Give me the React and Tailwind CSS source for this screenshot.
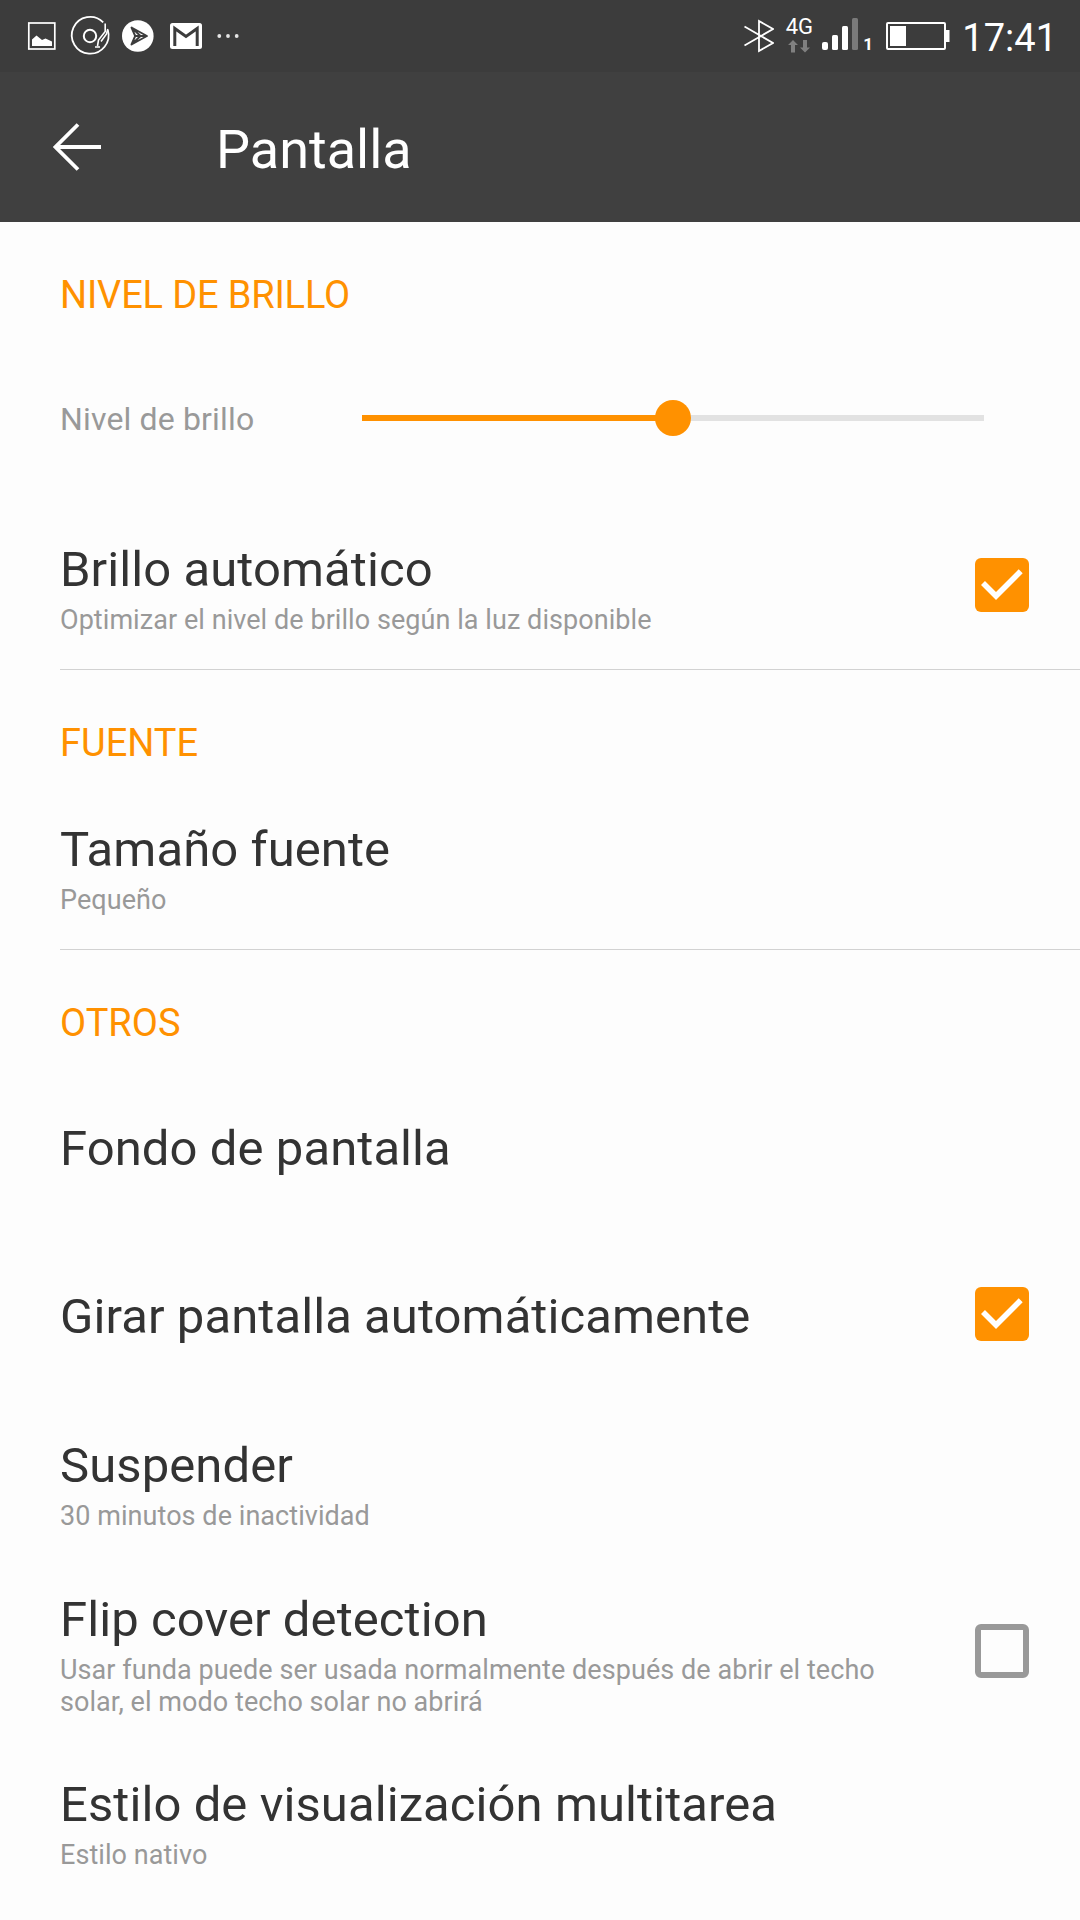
// Display settings screen — status bar, title bar and preference list
import clsx from 'clsx';

const SECTIONS = [
  {
    title: 'FUENTE',
    rows: [{ label: 'Tamaño fuente', summary: 'Pequeño', height: 'h-[168px]' }],
  },
  {
    title: 'OTROS',
    rows: [
      { label: 'Fondo de pantalla', height: 'h-[169px]' },
      { label: 'Girar pantalla automáticamente', checked: true, height: 'h-[168px]' },
      { label: 'Suspender', summary: '30 minutos de inactividad', height: 'h-[166px]' },
      {
        label: 'Flip cover detection',
        summary: 'Usar funda puede ser usada normalmente después de abrir el techo solar, el modo techo solar no abrirá',
        checked: false,
        height: 'h-[174px]',
      },
      { label: 'Estilo de visualización multitarea', summary: 'Estilo nativo', height: 'h-[164px]' },
    ],
  },
];

function NotificationIcons() {
  return (
    <svg width="250" height="72" viewBox="0 0 250 72" fill="none">
      {/* picture */}
      <rect x="28.8" y="23" width="26" height="26" stroke="#fff" strokeWidth="1.7" />
      <path d="M32 46V39.5L36.5 35.5L42 40L45.5 38.5L52 41.5V46Z" fill="#fff" />
      {/* turntable */}
      <path d="M103.2 22.3A18.4 18.4 0 1 0 107.8 30" stroke="#fff" strokeWidth="1.8" />
      <circle cx="90" cy="36" r="6.2" stroke="#fff" strokeWidth="2" />
      <path d="M105.2 23.5V31.5L98.5 40L97.5 46M107.8 29L106.5 34L101 41.5M95 47H100" stroke="#fff" strokeWidth="1.6" />
      {/* play store */}
      <circle cx="137.8" cy="36" r="15.8" fill="#fff" />
      <path
        d="M131.5 27.5L147 36L131.5 44.5L135.2 36ZM135.2 36H147M131.5 27.5L140.5 36L131.5 44.5"
        stroke="#3c3c3c"
        strokeWidth="1.9"
        strokeLinejoin="round"
      />
      {/* gmail */}
      <rect x="170" y="23" width="32" height="26" rx="2.5" fill="#fff" />
      <path d="M174.8 46V28.5L186 36.5L197.2 28.5V46" stroke="#3c3c3c" strokeWidth="3" />
      <circle cx="219.3" cy="36" r="1.9" fill="#e5e5e5" />
      <circle cx="228" cy="36" r="1.9" fill="#e5e5e5" />
      <circle cx="236.7" cy="36" r="1.9" fill="#e5e5e5" />
    </svg>
  );
}

function BluetoothIcon() {
  return (
    <svg width="30" height="34" viewBox="0 0 30 34" fill="none" stroke="#fff" strokeWidth="1.8">
      <path d="M.5 7.5L29 24L15 32V2L29 10L.5 26.5" />
    </svg>
  );
}

function DataArrows() {
  return (
    <svg width="22" height="13" viewBox="0 0 22 13" fill="#808080">
      <path d="M5 0L10 5H7V12.5H3V5H0Z" />
      <path d="M17 12.5L22 7.5H19V0H15V7.5H12Z" />
    </svg>
  );
}

function SignalIcon() {
  return (
    <svg width="36" height="32" viewBox="0 0 36 32" fill="#fff">
      <rect x="0" y="24" width="6" height="8" rx="2" />
      <rect x="10" y="17" width="6" height="15" rx="1.5" />
      <rect x="20" y="8" width="6" height="24" rx="1.5" />
      <rect x="30" y="0" width="6" height="32" rx="1.5" fill="#7a7a7a" />
    </svg>
  );
}

function BatteryIcon() {
  return (
    <svg width="64" height="28" viewBox="0 0 64 28" fill="#fff">
      <rect x="1" y="1" width="58" height="26" rx="1" fill="none" stroke="#fff" strokeWidth="2" />
      <rect x="4" y="4" width="16" height="20" />
      <path d="M59 8H63.5V20H59Z" />
    </svg>
  );
}

function StatusBar() {
  return (
    <div className="h-[72px] flex justify-between bg-[#3c3c3c] text-white">
      <NotificationIcons />
      <div className="flex items-start pr-[23px]">
        <div className="mt-[19px] mr-[11px]"><BluetoothIcon /></div>
        <div className="mt-[16px] w-[28px] mr-[9px] flex flex-col items-center">
          <span className="text-[22px] leading-[22px] -mb-[2px]">4G</span>
          <div className="mt-1"><DataArrows /></div>
        </div>
        <div className="mt-[18px]"><SignalIcon /></div>
        <span className="mt-[34px] ml-[5px] w-[10px] text-[17px] leading-[20px] font-bold">1</span>
        <div className="mt-[22px] ml-[13px]"><BatteryIcon /></div>
        <span className="mt-[16px] ml-[12px] text-[38px] leading-[44px]">17:41</span>
      </div>
    </div>
  );
}

function Header() {
  return (
    <header className="h-[150px] flex items-center bg-[#404040] text-white">
      <svg className="ml-[53px]" width="49" height="48" viewBox="0 0 49 48" fill="none" stroke="#fff" strokeWidth="3.8">
        <path d="M48 24H2.5M25 1.5L2.5 24L25 46.5" />
      </svg>
      <h1 className="mt-[5px] ml-[114px] text-[54px] leading-[64px]">Pantalla</h1>
    </header>
  );
}

function SectionTitle({ children, divider, className }) {
  return (
    <div className={clsx('ml-[60px] h-[112px]', divider ? 'border-t border-[#d2d2d2] pt-[51px]' : 'pt-[51px]')}>
      <h2 className={clsx('text-[38px] leading-[44px] text-[#ff9100]', className)}>{children}</h2>
    </div>
  );
}

function Checkbox({ checked }) {
  if (!checked) {
    return <div className="size-[54px] shrink-0 rounded-[6px] border-[6px] border-[#999]" />;
  }
  return (
    <div className="size-[54px] shrink-0 rounded-[6px] bg-[#ff9100]">
      <svg width="54" height="54" viewBox="0 0 54 54" fill="none" stroke="#fff" strokeWidth="5.6">
        <path d="M8 25L21 38L45.7 13.2" />
      </svg>
    </div>
  );
}

function Row({ label, summary, checked, height }) {
  return (
    <div className={clsx('flex items-center justify-between pl-[60px] pr-[51px]', height)}>
      <div className={clsx('w-[840px]', summary ? 'pt-2' : 'pt-1.5')}>
        <p className="text-[49px] leading-[56px] tracking-[0.08px] text-[#333] whitespace-nowrap">{label}</p>
        {summary && <p className="mt-1.5 text-[27px] leading-[32px] tracking-[0.06px] text-[#999]">{summary}</p>}
      </div>
      {checked !== undefined && <Checkbox checked={checked} />}
    </div>
  );
}

function BrightnessSlider({ value }) {
  return (
    <div className="h-[167px] flex items-center pl-[60px]">
      <span className="mt-[3px] w-[302px] text-[32px] leading-[38px] tracking-[0.16px] text-[#999]">Nivel de brillo</span>
      <div className="w-[622px] h-[6px] flex items-center bg-[#e2e2e2]">
        <div className="h-[6px] bg-[#ff9100]" style={{ width: `${value}%` }} />
        <div className="size-[36px] -ml-[18px] shrink-0 rounded-full bg-[#ff9100]" />
      </div>
    </div>
  );
}

export default function App() {
  return (
    <div className="w-[1080px] h-[1920px] overflow-hidden bg-[#fdfdfd] font-['Roboto',sans-serif]">
      <StatusBar />
      <Header />
      <main>
        <SectionTitle className="tracking-[-0.16px]">NIVEL DE BRILLO</SectionTitle>
        <BrightnessSlider value={50} />
        <Row
          label="Brillo automático"
          summary="Optimizar el nivel de brillo según la luz disponible"
          checked
          height="h-[168px]"
        />
        {SECTIONS.map(section => (
          <section key={section.title}>
            <SectionTitle divider>{section.title}</SectionTitle>
            {section.rows.map(row => <Row key={row.label} {...row} />)}
          </section>
        ))}
      </main>
    </div>
  );
}
